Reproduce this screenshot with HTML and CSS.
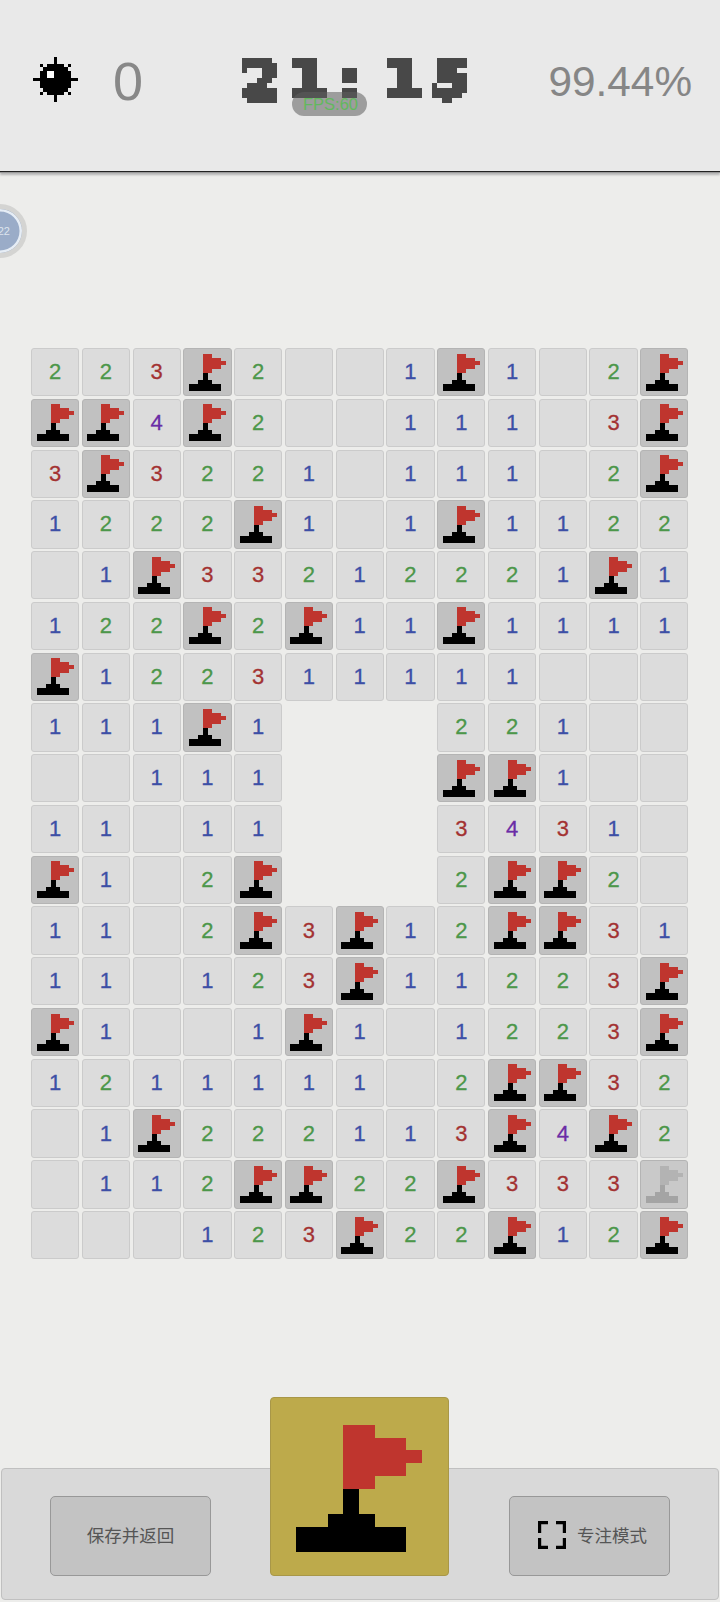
FILE: index.html
```html
<!DOCTYPE html>
<html lang="zh">
<head>
<meta charset="utf-8">
<title>扫雷</title>
<link rel="stylesheet" href="styles.css">
</head>
<body>
<svg class="sprite" aria-hidden="true">
  <defs>
    <symbol id="flag" viewBox="0 0 8 10" preserveAspectRatio="none">
      <path fill="#bf352e" d="M3 0h2v1h2v1h1v1H7v1H5v1H3z"/>
      <path fill="#000" d="M3 5h1v2h1v1h2v2H0V8h2V7h1z"/>
    </symbol>
    <filter id="pixel" x="0" y="0" width="100%" height="100%" filterUnits="objectBoundingBox" primitiveUnits="userSpaceOnUse" color-interpolation-filters="sRGB">
      <feFlood x="2" y="2" width="1" height="1" flood-color="#000"/>
      <feComposite x="0" y="0" width="5" height="5"/>
      <feTile result="tile"/>
      <feComposite in="SourceGraphic" in2="tile" operator="in"/>
      <feMorphology operator="dilate" radius="2"/>
      <feComponentTransfer result="solid">
        <feFuncA type="discrete" tableValues="0 1"/>
      </feComponentTransfer>
      <feFlood flood-color="#484848"/>
      <feComposite in2="solid" operator="in"/>
    </filter>
  </defs>
</svg>
<main class="page">
  <header class="topbar">
    <div class="mines">
      <svg class="mine" viewBox="0 0 13 13" shape-rendering="crispEdges"><path fill="#000" d="M6 0h1v2h2v1h1v1h1v2h2v1h-2v2h-1v1H9v1H7v2H6v-2H4v-1H3V9H2V7H0V6h2V4h1V3h1V2h2z"/><path fill="#000" d="M2 2h1v1H2zM10 2h1v1h-1zM2 10h1v1H2zM10 10h1v1h-1z"/><path fill="#fff" d="M4 4h2v2H4z"/></svg>
      <span class="mine-count">0</span>
    </div>
    <div class="timer"><span class="timer-part">21:</span><span class="timer-part timer-sec">15</span></div>
    <span class="percent">99.44%</span>
    <span class="fps">FPS:60</span>
  </header>
  <div class="avatar"><span class="avatar-text">22</span></div>
  <section class="board">
    <div class="c n2">2</div><div class="c n2">2</div><div class="c n3">3</div><div class="c f"><svg><use href="#flag"/></svg></div><div class="c n2">2</div><div class="c"></div><div class="c"></div><div class="c n1">1</div><div class="c f"><svg><use href="#flag"/></svg></div><div class="c n1">1</div><div class="c"></div><div class="c n2">2</div><div class="c f"><svg><use href="#flag"/></svg></div>
    <div class="c f"><svg><use href="#flag"/></svg></div><div class="c f"><svg><use href="#flag"/></svg></div><div class="c n4">4</div><div class="c f"><svg><use href="#flag"/></svg></div><div class="c n2">2</div><div class="c"></div><div class="c"></div><div class="c n1">1</div><div class="c n1">1</div><div class="c n1">1</div><div class="c"></div><div class="c n3">3</div><div class="c f"><svg><use href="#flag"/></svg></div>
    <div class="c n3">3</div><div class="c f"><svg><use href="#flag"/></svg></div><div class="c n3">3</div><div class="c n2">2</div><div class="c n2">2</div><div class="c n1">1</div><div class="c"></div><div class="c n1">1</div><div class="c n1">1</div><div class="c n1">1</div><div class="c"></div><div class="c n2">2</div><div class="c f"><svg><use href="#flag"/></svg></div>
    <div class="c n1">1</div><div class="c n2">2</div><div class="c n2">2</div><div class="c n2">2</div><div class="c f"><svg><use href="#flag"/></svg></div><div class="c n1">1</div><div class="c"></div><div class="c n1">1</div><div class="c f"><svg><use href="#flag"/></svg></div><div class="c n1">1</div><div class="c n1">1</div><div class="c n2">2</div><div class="c n2">2</div>
    <div class="c"></div><div class="c n1">1</div><div class="c f"><svg><use href="#flag"/></svg></div><div class="c n3">3</div><div class="c n3">3</div><div class="c n2">2</div><div class="c n1">1</div><div class="c n2">2</div><div class="c n2">2</div><div class="c n2">2</div><div class="c n1">1</div><div class="c f"><svg><use href="#flag"/></svg></div><div class="c n1">1</div>
    <div class="c n1">1</div><div class="c n2">2</div><div class="c n2">2</div><div class="c f"><svg><use href="#flag"/></svg></div><div class="c n2">2</div><div class="c f"><svg><use href="#flag"/></svg></div><div class="c n1">1</div><div class="c n1">1</div><div class="c f"><svg><use href="#flag"/></svg></div><div class="c n1">1</div><div class="c n1">1</div><div class="c n1">1</div><div class="c n1">1</div>
    <div class="c f"><svg><use href="#flag"/></svg></div><div class="c n1">1</div><div class="c n2">2</div><div class="c n2">2</div><div class="c n3">3</div><div class="c n1">1</div><div class="c n1">1</div><div class="c n1">1</div><div class="c n1">1</div><div class="c n1">1</div><div class="c"></div><div class="c"></div><div class="c"></div>
    <div class="c n1">1</div><div class="c n1">1</div><div class="c n1">1</div><div class="c f"><svg><use href="#flag"/></svg></div><div class="c n1">1</div><div class="x"></div><div class="x"></div><div class="x"></div><div class="c n2">2</div><div class="c n2">2</div><div class="c n1">1</div><div class="c"></div><div class="c"></div>
    <div class="c"></div><div class="c"></div><div class="c n1">1</div><div class="c n1">1</div><div class="c n1">1</div><div class="x"></div><div class="x"></div><div class="x"></div><div class="c f"><svg><use href="#flag"/></svg></div><div class="c f"><svg><use href="#flag"/></svg></div><div class="c n1">1</div><div class="c"></div><div class="c"></div>
    <div class="c n1">1</div><div class="c n1">1</div><div class="c"></div><div class="c n1">1</div><div class="c n1">1</div><div class="x"></div><div class="x"></div><div class="x"></div><div class="c n3">3</div><div class="c n4">4</div><div class="c n3">3</div><div class="c n1">1</div><div class="c"></div>
    <div class="c f"><svg><use href="#flag"/></svg></div><div class="c n1">1</div><div class="c"></div><div class="c n2">2</div><div class="c f"><svg><use href="#flag"/></svg></div><div class="x"></div><div class="x"></div><div class="x"></div><div class="c n2">2</div><div class="c f"><svg><use href="#flag"/></svg></div><div class="c f"><svg><use href="#flag"/></svg></div><div class="c n2">2</div><div class="c"></div>
    <div class="c n1">1</div><div class="c n1">1</div><div class="c"></div><div class="c n2">2</div><div class="c f"><svg><use href="#flag"/></svg></div><div class="c n3">3</div><div class="c f"><svg><use href="#flag"/></svg></div><div class="c n1">1</div><div class="c n2">2</div><div class="c f"><svg><use href="#flag"/></svg></div><div class="c f"><svg><use href="#flag"/></svg></div><div class="c n3">3</div><div class="c n1">1</div>
    <div class="c n1">1</div><div class="c n1">1</div><div class="c"></div><div class="c n1">1</div><div class="c n2">2</div><div class="c n3">3</div><div class="c f"><svg><use href="#flag"/></svg></div><div class="c n1">1</div><div class="c n1">1</div><div class="c n2">2</div><div class="c n2">2</div><div class="c n3">3</div><div class="c f"><svg><use href="#flag"/></svg></div>
    <div class="c f"><svg><use href="#flag"/></svg></div><div class="c n1">1</div><div class="c"></div><div class="c"></div><div class="c n1">1</div><div class="c f"><svg><use href="#flag"/></svg></div><div class="c n1">1</div><div class="c"></div><div class="c n1">1</div><div class="c n2">2</div><div class="c n2">2</div><div class="c n3">3</div><div class="c f"><svg><use href="#flag"/></svg></div>
    <div class="c n1">1</div><div class="c n2">2</div><div class="c n1">1</div><div class="c n1">1</div><div class="c n1">1</div><div class="c n1">1</div><div class="c n1">1</div><div class="c"></div><div class="c n2">2</div><div class="c f"><svg><use href="#flag"/></svg></div><div class="c f"><svg><use href="#flag"/></svg></div><div class="c n3">3</div><div class="c n2">2</div>
    <div class="c"></div><div class="c n1">1</div><div class="c f"><svg><use href="#flag"/></svg></div><div class="c n2">2</div><div class="c n2">2</div><div class="c n2">2</div><div class="c n1">1</div><div class="c n1">1</div><div class="c n3">3</div><div class="c f"><svg><use href="#flag"/></svg></div><div class="c n4">4</div><div class="c f"><svg><use href="#flag"/></svg></div><div class="c n2">2</div>
    <div class="c"></div><div class="c n1">1</div><div class="c n1">1</div><div class="c n2">2</div><div class="c f"><svg><use href="#flag"/></svg></div><div class="c f"><svg><use href="#flag"/></svg></div><div class="c n2">2</div><div class="c n2">2</div><div class="c f"><svg><use href="#flag"/></svg></div><div class="c n3">3</div><div class="c n3">3</div><div class="c n3">3</div><div class="c f ghost"><svg><use href="#flag"/></svg></div>
    <div class="c"></div><div class="c"></div><div class="c"></div><div class="c n1">1</div><div class="c n2">2</div><div class="c n3">3</div><div class="c f"><svg><use href="#flag"/></svg></div><div class="c n2">2</div><div class="c n2">2</div><div class="c f"><svg><use href="#flag"/></svg></div><div class="c n1">1</div><div class="c n2">2</div><div class="c f"><svg><use href="#flag"/></svg></div>
  </section>
  <footer class="panel">
    <button class="btn" type="button">保存并返回</button>
    <button class="flag-btn" type="button"><svg><use href="#flag"/></svg></button>
    <button class="btn btn-focus" type="button">
      <svg class="focus-icon" viewBox="0 0 28 28"><path fill="none" stroke="#000" stroke-width="3.2" d="M10 1.6H1.6V12M18 1.6H26.4V12M1.6 17v9.4H10M26.4 17v9.4H18"/></svg>
      <span>专注模式</span>
    </button>
  </footer>
</main>
</body>
</html>
```
FILE: styles.css
```css
* { box-sizing: border-box; }
html, body { margin: 0; padding: 0; }
body {
  width: 720px;
  height: 1602px;
  overflow: hidden;
  background: #ededeb;
  font-family: "Liberation Sans", "Noto Sans CJK SC", sans-serif;
}
.sprite { position: absolute; width: 0; height: 0; }
.page {
  position: relative;
  display: flex;
  flex-direction: column;
  height: 1602px;
}
.topbar {
  position: relative;
  display: flex;
  align-items: center;
  height: 172px;
  padding: 0 28px 12px 33px;
  background: #e9e9e9;
  border-bottom: 1px solid #222;
  box-shadow: 0 1px 0 #999, 0 3px 2px #b5b5b5;
}
.mines { display: flex; align-items: center; gap: 35px; }
.mine { width: 45px; height: 45px; display: block; shape-rendering: crispEdges; }
.mine-count { font-size: 54px; line-height: 1; color: #888; margin-top: 2px; }
.timer {
  display: flex;
  margin-left: 99px;
  font-family: "DejaVu Sans", sans-serif;
  font-weight: 700;
  font-size: 54px;
  line-height: 1;
  color: #484848;
  letter-spacing: 10px;
  -webkit-text-stroke: 4px #484848;
  filter: url(#pixel);
}
.timer-sec { margin-left: 16px; }
.percent { margin-left: auto; margin-top: 5px; font-size: 42.3px; line-height: 1; color: #868686; }
.fps {
  position: absolute;
  left: 292px;
  top: 92px;
  width: 75px;
  height: 24px;
  padding-left: 11px;
  border-radius: 12px;
  background: rgba(95, 95, 95, 0.55);
  color: #62b85e;
  font-size: 16.5px;
  line-height: 24px;
}
.avatar {
  position: absolute;
  left: -27px;
  top: 204px;
  width: 54px;
  height: 54px;
  border-radius: 50%;
  border: 5px solid #d4d4d2;
  background: #9aacc8;
  box-shadow: inset 0 0 0 2.5px #e6edf5;
  display: flex;
  align-items: center;
  justify-content: flex-end;
  padding-right: 12px;
}
.avatar-text { font-size: 11px; color: #dde4ee; }
.board {
  display: grid;
  grid-template-columns: repeat(13, 48.27px);
  grid-auto-rows: 48.27px;
  gap: 2.5px;
  margin: 176px 0 0 31px;
}
.c {
  display: flex;
  align-items: center;
  justify-content: center;
  border: 1px solid #cbcbcb;
  border-radius: 3px;
  background: #dcdcdc;
  font-size: 22px;
  line-height: 1;
  -webkit-text-stroke: 0.3px currentColor;
}
.c.f { background: #c1c1c1; border-color: #b4b4b4; }
.c.f svg { width: 37px; height: 37px; display: block; shape-rendering: crispEdges; }
.c.ghost { background: #c9c9c9; }
.c.ghost svg { opacity: 0.18; filter: grayscale(1); }
.n1 { color: #3d4fa6; }
.n2 { color: #4c974a; }
.n3 { color: #a33232; }
.n4 { color: #6a2ca6; }
.panel {
  display: flex;
  align-items: flex-end;
  justify-content: space-between;
  height: 132px;
  margin: auto 1px 2px;
  padding: 0 48px 23px;
  background: #d9d9d9;
  border: 1px solid #c0c0c0;
  border-radius: 4px;
}
.btn {
  display: flex;
  align-items: center;
  justify-content: center;
  gap: 11px;
  width: 161px;
  height: 80px;
  padding: 0 0 3px;
  border: 1px solid #989898;
  border-radius: 5px;
  background: #c3c3c3;
  color: #555;
  font: inherit;
  font-size: 17.5px;
}
.btn-focus { padding-left: 6px; }
.focus-icon { width: 28px; height: 28px; display: block; }
.flag-btn {
  display: flex;
  align-items: center;
  justify-content: center;
  width: 179px;
  height: 179px;
  margin: -72px 1px 0 0;
  padding: 4px 2px 0 0;
  border: 1px solid #a89748;
  border-radius: 4px;
  background: #bdaa4b;
}
.flag-btn svg { width: 126px; height: 127px; display: block; shape-rendering: crispEdges; }
```
